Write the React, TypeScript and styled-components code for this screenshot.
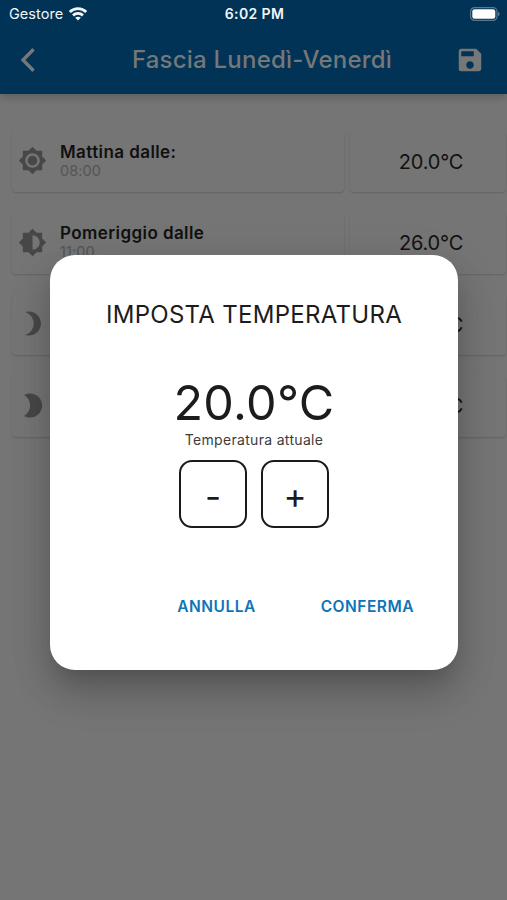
import React from "react";
import styled, { createGlobalStyle } from "styled-components";
import {
  MdBrightness2,
  MdBrightness3,
  MdBrightness6,
  MdBrightness7,
  MdSave,
} from "react-icons/md";

const GlobalStyle = createGlobalStyle`
  * { box-sizing: border-box; }
  body {
    margin: 0;
    background: #757575;
    font-family: Inter, "Liberation Sans", sans-serif;
  }
  button {
    padding: 0;
    border: 0;
    background: none;
    font-family: inherit;
  }
`;

const Screen = styled.div`
  position: relative;
  display: flex;
  flex-direction: column;
  width: 507px;
  height: 900px;
  overflow: hidden;
  background: #757575;
`;

const Header = styled.header`
  flex: none;
  height: 94px;
  background: #003356;
  box-shadow: 0 3px 8px rgba(0, 0, 0, 0.2);
`;

const StatusBar = styled.div`
  display: grid;
  grid-template-columns: 1fr auto 1fr;
  align-items: center;
  height: 27px;
  padding: 0 7px 0 9px;
  color: #f2f6f8;
  line-height: 18px;
`;

const Carrier = styled.div`
  display: flex;
  align-items: center;
  gap: 6px;
  font-size: 14.5px;
  letter-spacing: 0.05px;
`;

const Clock = styled.div`
  font-size: 14px;
  font-weight: 600;
  letter-spacing: 0.4px;
`;

const BatteryIcon = styled.svg`
  justify-self: end;
`;

const NavBar = styled.div`
  display: grid;
  grid-template-columns: 60px 1fr 60px;
  align-items: center;
  height: 66px;
  color: #757778;
`;

const NavButton = styled.button<{ $inset: number }>`
  display: flex;
  padding-left: ${(p) => p.$inset}px;
  color: #757778;
`;

const NavTitle = styled.h1`
  margin: 0;
  padding-left: 17px;
  text-align: center;
  white-space: nowrap;
  font-size: 24px;
  line-height: 30px;
  font-weight: 500;
  letter-spacing: 0.22px;
`;

const Schedule = styled.main`
  display: flex;
  flex-direction: column;
  gap: 20.5px;
  padding: 37px 0 0 12px;
`;

const Slot = styled.div`
  display: grid;
  grid-template-columns: 332px 156px;
  gap: 6px;
  height: 61px;
`;

const Card = styled.div`
  display: flex;
  align-items: center;
  border-radius: 4px;
  background: #757575;
  box-shadow: 0 1px 2px rgba(0, 0, 0, 0.16);
`;

const PeriodCard = styled(Card)`
  gap: 13px;
  padding: 0 0 2px 6px;
  color: #474747;
`;

const TemperatureCard = styled(Card)`
  justify-content: center;
  padding-left: 6px;
  color: #121212;
  font-size: 20px;
  letter-spacing: -0.2px;
`;

const PeriodText = styled.div`
  display: flex;
  flex-direction: column;
`;

const PeriodName = styled.span`
  color: #101010;
  font-size: 17px;
  line-height: 20px;
  font-weight: 600;
  letter-spacing: 0.42px;
`;

const PeriodTime = styled.span`
  color: #545454;
  font-size: 14.5px;
  line-height: 18px;
  letter-spacing: 0.1px;
`;

const Overlay = styled.div`
  position: absolute;
  inset: 0;
  display: flex;
  align-items: center;
  justify-content: center;
  padding: 25px 0 0 1px;
`;

const Dialog = styled.section`
  display: flex;
  flex-direction: column;
  align-items: center;
  width: 408px;
  height: 415px;
  padding-top: 43px;
  border-radius: 25px;
  background: #fff;
  color: #1c1c1c;
  box-shadow:
    0 14px 19px -9px rgba(0, 0, 0, 0.14),
    0 26px 38px 0 rgba(0, 0, 0, 0.15),
    0 10px 44px 2px rgba(0, 0, 0, 0.1);
`;

const DialogTitle = styled.h2`
  margin: 0;
  font-size: 24px;
  line-height: 34px;
  font-weight: 400;
  letter-spacing: 0.28px;
`;

const Reading = styled.div`
  margin-top: 41px;
  font-size: 48.5px;
  line-height: 60px;
  letter-spacing: 0.3px;
`;

const Caption = styled.div`
  margin-top: -2px;
  color: #3c3c3c;
  font-size: 14px;
  line-height: 17px;
  letter-spacing: 0.32px;
`;

const Stepper = styled.div`
  display: flex;
  gap: 14px;
  margin-top: 12px;
`;

const StepButton = styled.button<{ $drop: number }>`
  width: 68px;
  height: 68px;
  padding-top: ${(p) => p.$drop}px;
  border: 2px solid #1a1a1a;
  border-radius: 13px;
  color: #1a1a1a;
  font-size: 35px;
  line-height: 60px;
`;

const Actions = styled.div`
  display: flex;
  align-self: flex-end;
  gap: 65px;
  margin: 68px 44px 0 0;
`;

const Action = styled.button`
  color: #0d74b8;
  font-size: 15.5px;
  line-height: 21px;
  font-weight: 600;
  letter-spacing: 0.5px;
`;

const periods = [
  { name: "Mattina dalle:", time: "08:00", temperature: "20.0°C", Icon: MdBrightness7 },
  { name: "Pomeriggio dalle", time: "11:00", temperature: "26.0°C", Icon: MdBrightness6 },
  { name: "", time: "", temperature: "20.0°C", Icon: MdBrightness3 },
  { name: "", time: "", temperature: "20.0°C", Icon: MdBrightness2 },
];

export default function App() {
  return (
    <Screen>
      <GlobalStyle />
      <Header>
        <StatusBar>
          <Carrier>
            Gestore
            <svg width="18" height="14" viewBox="0 0 18 14" fill="none" stroke="currentColor" strokeWidth="2.8">
              <path d="M.8 5C5.4.6 12.6.6 17.2 5" />
              <path d="M4 8.4c2.8-2.6 7.2-2.6 10 0" />
              <path d="M9 13.6 6.2 10.8c1.6-1.5 4-1.5 5.6 0Z" fill="currentColor" stroke="none" />
            </svg>
          </Carrier>
          <Clock>6:02 PM</Clock>
          <BatteryIcon width="30" height="14" viewBox="0 0 30 14">
            <rect x=".6" y=".6" width="26.4" height="12.8" rx="4" fill="none" stroke="#59798e" strokeWidth="1.2" />
            <rect x="2.3" y="2.3" width="23" height="9.4" rx="2.3" fill="#fff" />
            <path d="M28 4.8c2.1.8 2.1 3.6 0 4.4Z" fill="#59798e" />
          </BatteryIcon>
        </StatusBar>
        <NavBar>
          <NavButton $inset={20} aria-label="Indietro">
            <svg width="16" height="26" viewBox="0 0 16 26" fill="none" stroke="currentColor" strokeWidth="3.4">
              <path d="M13.6 2.2 3 13l10.6 10.8" />
            </svg>
          </NavButton>
          <NavTitle>Fascia Lunedì-Venerdì</NavTitle>
          <NavButton $inset={8} aria-label="Salva">
            <MdSave size={30} />
          </NavButton>
        </NavBar>
      </Header>
      <Schedule>
        {periods.map(({ name, time, temperature, Icon }, index) => (
          <Slot key={index}>
            <PeriodCard>
              <Icon size={29} />
              <PeriodText>
                <PeriodName>{name}</PeriodName>
                <PeriodTime>{time}</PeriodTime>
              </PeriodText>
            </PeriodCard>
            <TemperatureCard>{temperature}</TemperatureCard>
          </Slot>
        ))}
      </Schedule>
      <Overlay>
        <Dialog role="dialog" aria-modal="true">
          <DialogTitle>IMPOSTA TEMPERATURA</DialogTitle>
          <Reading>20.0°C</Reading>
          <Caption>Temperatura attuale</Caption>
          <Stepper>
            <StepButton $drop={4}>-</StepButton>
            <StepButton $drop={1}>+</StepButton>
          </Stepper>
          <Actions>
            <Action>ANNULLA</Action>
            <Action>CONFERMA</Action>
          </Actions>
        </Dialog>
      </Overlay>
    </Screen>
  );
}
